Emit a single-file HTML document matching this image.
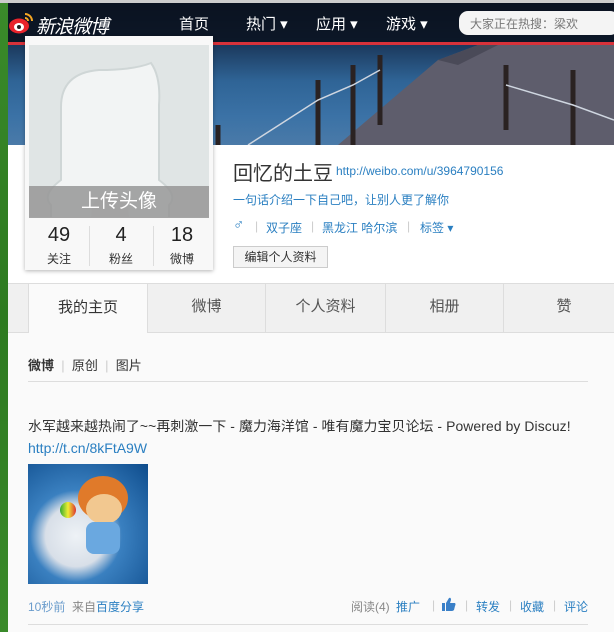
<!DOCTYPE html>
<html><head><meta charset="utf-8"><style>
*{margin:0;padding:0;box-sizing:border-box}
body{width:614px;height:632px;overflow:hidden;position:relative;background:#fafafa;font-family:"Liberation Sans","Noto Sans CJK SC",sans-serif;font-size:12px;color:#333}
.a{position:absolute}
a{color:#2a7fc1;text-decoration:none}
.s{color:#ccc}
</style></head><body>
<div class="a" style="left:0;top:0;width:8px;height:632px;background:linear-gradient(#3a8a2a,#2d7a20 50%,#3a8a2a)"></div>
<div class="a" style="left:0;top:0;width:614px;height:3px;background:#ccc"></div>
<!-- banner -->
<div class="a" style="left:8px;top:3px;width:606px;height:142px;background:linear-gradient(180deg,#0c1a2c 0%,#1c3a5e 30%,#2f6496 55%,#3b72a6 80%,#4a7aa8 100%)"></div>
<svg class="a" style="left:8px;top:45px" width="606" height="100"><polygon points="330,100 430,15 470,0 606,0 606,100" fill="#5e5d6c"/><polygon points="430,15 470,0 490,0 450,20" fill="#4a4a58"/><g stroke="#2a2222" stroke-width="5"><line x1="210" y1="100" x2="210" y2="80"/><line x1="310" y1="100" x2="310" y2="35"/><line x1="345" y1="100" x2="345" y2="20"/><line x1="372" y1="80" x2="372" y2="10"/><line x1="498" y1="85" x2="498" y2="20"/><line x1="565" y1="100" x2="565" y2="25"/></g><g stroke="#cfd6e0" stroke-width="1.5" fill="none"><path d="M240 100 L310 55 L345 40 L372 25"/><path d="M498 40 L565 60 L606 75"/></g></svg>
<!-- top nav -->
<div class="a" style="left:8px;top:3px;width:606px;height:40px;background:rgba(10,18,30,.85)"></div>
<div class="a" style="left:8px;top:42px;width:606px;height:3px;background:#d8323a"></div>
<div class="a" style="left:8px;top:11px;width:26px;height:24px">
<svg width="26" height="24"><ellipse cx="11" cy="15" rx="10" ry="7.5" fill="#e8232b"/><ellipse cx="11" cy="16" rx="5" ry="4" fill="#fff"/><circle cx="11" cy="16" r="2" fill="#222"/><path d="M17 3a7 7 0 0 1 7 7" stroke="#f5a623" stroke-width="2" fill="none"/><path d="M17 7a3 3 0 0 1 3 3" stroke="#f5a623" stroke-width="2" fill="none"/></svg></div>
<div class="a" style="left:36px;top:12px;color:#fff;font-size:19px;font-style:italic;letter-spacing:-1px">新浪微博</div>
<div class="a" style="left:179px;top:13px;color:#fff;font-size:15px">首页</div>
<div class="a" style="left:246px;top:13px;color:#fff;font-size:15px">热门 ▾</div>
<div class="a" style="left:316px;top:13px;color:#fff;font-size:15px">应用 ▾</div>
<div class="a" style="left:386px;top:13px;color:#fff;font-size:15px">游戏 ▾</div>
<div class="a" style="left:459px;top:11px;width:160px;height:24px;background:#f4f4f4;border-radius:9px"></div>
<div class="a" style="left:470px;top:15px;color:#777;font-size:12px">大家正在热搜：梁欢</div>
<!-- white area -->
<div class="a" style="left:8px;top:145px;width:606px;height:187px;background:#fff"></div>
<!-- avatar card -->
<div class="a" style="left:25px;top:36px;width:188px;height:234px;background:#f8f8f8;box-shadow:0 1px 4px rgba(0,0,0,.3)"></div>
<div class="a" style="left:29px;top:45px;width:180px;height:172px;background:#e0e5e5;overflow:hidden">
<svg width="180" height="172"><path d="M22 200 L22 160 Q12 150 32 135 L32 62 Q32 28 70 25 Q105 25 122 18 Q132 32 130 60 L130 135 Q150 150 140 160 L140 200 Z" fill="#f2f4f4" stroke="#cfd6d6" stroke-width="2"/><path d="M62 172 Q62 150 80 148 L84 148 Q100 150 100 172" fill="#e8ecec"/></svg></div>
<div class="a" style="left:29px;top:186px;width:180px;height:32px;background:rgba(150,150,150,.85);color:#fff;font-size:19px;text-align:center;line-height:32px">上传头像</div>
<div class="a" style="left:29px;top:224px;width:60px;text-align:center;font-size:20px;color:#222">49</div>
<div class="a" style="left:89px;top:224px;width:64px;text-align:center;font-size:20px;color:#222">4</div>
<div class="a" style="left:153px;top:224px;width:58px;text-align:center;font-size:20px;color:#222">18</div>
<div class="a" style="left:29px;top:250px;width:60px;text-align:center">关注</div>
<div class="a" style="left:89px;top:250px;width:64px;text-align:center">粉丝</div>
<div class="a" style="left:153px;top:250px;width:58px;text-align:center">微博</div>
<div class="a" style="left:89px;top:226px;width:1px;height:40px;background:#ddd"></div>
<div class="a" style="left:153px;top:226px;width:1px;height:40px;background:#ddd"></div>
<!-- profile info -->
<div class="a" style="left:233px;top:157px;font-size:20px;color:#333">回忆的土豆</div>
<div class="a" style="left:336px;top:164px;font-size:12px"><a>http://weibo.com/u/3964790156</a></div>
<div class="a" style="left:233px;top:191px"><a>一句话介绍一下自己吧，让别人更了解你</a></div>
<div class="a" style="left:233px;top:216px"><a style="font-size:15px;font-weight:bold">♂</a></div>
<div class="a s" style="left:255px;top:219px">|</div>
<div class="a" style="left:266px;top:219px"><a>双子座</a></div>
<div class="a s" style="left:311px;top:219px">|</div>
<div class="a" style="left:322px;top:219px"><a>黑龙江 哈尔滨</a></div>
<div class="a s" style="left:407px;top:219px">|</div>
<div class="a" style="left:420px;top:219px"><a>标签 ▾</a></div>
<div class="a" style="left:233px;top:246px;width:95px;height:22px;border:1px solid #ccc;background:#f4f4f4;text-align:center;line-height:20px">编辑个人资料</div>
<!-- tabs -->
<div class="a" style="left:8px;top:283px;width:606px;height:50px;background:#f0f0f0;border-top:1px solid #ddd;border-bottom:1px solid #ddd"></div>
<div class="a" style="left:28px;top:283px;width:120px;height:50px;background:#fafafa;border:1px solid #ddd;border-bottom:none;font-size:15px;text-align:center;line-height:48px">我的主页</div>
<div class="a" style="left:148px;top:284px;width:118px;height:48px;font-size:15px;text-align:center;line-height:46px;color:#555;border-right:1px solid #ddd">微博</div>
<div class="a" style="left:266px;top:284px;width:120px;height:48px;font-size:15px;text-align:center;line-height:46px;color:#555;border-right:1px solid #ddd">个人资料</div>
<div class="a" style="left:386px;top:284px;width:118px;height:48px;font-size:15px;text-align:center;line-height:46px;color:#555;border-right:1px solid #ddd">相册</div>
<div class="a" style="left:504px;top:284px;width:120px;height:48px;font-size:15px;text-align:center;line-height:46px;color:#555">赞</div>
<!-- subtabs -->
<div class="a" style="left:28px;top:355px;font-size:13px"><b>微博</b> <span style="color:#ccc">&nbsp;|&nbsp;</span> 原创 <span style="color:#ccc">&nbsp;|&nbsp;</span> 图片</div>
<div class="a" style="left:28px;top:381px;width:560px;height:1px;background:#ddd"></div>
<!-- post -->
<div class="a" style="left:28px;top:416px;font-size:13.9px;color:#333;white-space:nowrap;letter-spacing:0.1px">水军越来越热闹了~~再刺激一下 - 魔力海洋馆 - 唯有魔力宝贝论坛 - Powered by Discuz!</div>
<div class="a" style="left:28px;top:440px;font-size:14px"><a>http://t.cn/8kFtA9W</a></div>
<div class="a" style="left:28px;top:464px;width:120px;height:120px;background:radial-gradient(circle at 40% 60%,#eef2f6 0,#d8dfe8 30%,#3a80c0 45%,#0e4c8c 100%);overflow:hidden">
<div class="a" style="left:50px;top:12px;width:50px;height:44px;border-radius:50%;background:#e07a2a"></div>
<div class="a" style="left:58px;top:30px;width:36px;height:30px;border-radius:50%;background:#f2c890"></div>
<div class="a" style="left:58px;top:58px;width:34px;height:32px;border-radius:8px;background:#6aa8e0"></div>
<div class="a" style="left:32px;top:38px;width:16px;height:16px;border-radius:50%;background:linear-gradient(90deg,#3a3,#ee3,#d33)"></div>
</div>
<div class="a" style="left:28px;top:598px"><a style="color:#6a9ccc">10秒前</a> &nbsp;<span style="color:#888">来自</span><a>百度分享</a></div>
<div class="a" style="left:351px;top:598px;color:#888">阅读(4)</div>
<div class="a" style="left:396px;top:598px"><a>推广</a></div>
<div class="a s" style="left:432px;top:598px">|</div>
<svg class="a" style="left:442px;top:597px" width="14" height="14"><rect x="0" y="6" width="3" height="8" fill="#3a80c8"/><path d="M4 6 L7 1 Q9 0 9 3 L8 6 L13 6 Q14 7 13 9 L12 13 Q11 14 10 14 L4 14 Z" fill="#3a80c8"/></svg>
<div class="a s" style="left:465px;top:598px">|</div>
<div class="a" style="left:476px;top:598px"><a>转发</a></div>
<div class="a s" style="left:509px;top:598px">|</div>
<div class="a" style="left:520px;top:598px"><a>收藏</a></div>
<div class="a s" style="left:553px;top:598px">|</div>
<div class="a" style="left:564px;top:598px"><a>评论</a></div>
<div class="a" style="left:28px;top:624px;width:560px;height:1px;background:#ddd"></div>
</body></html>
